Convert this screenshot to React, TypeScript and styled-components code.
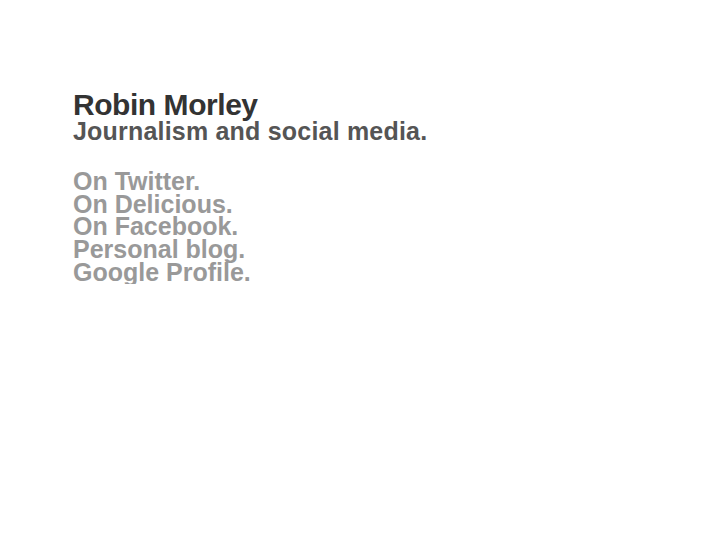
import React from 'react';
import styled, { createGlobalStyle } from 'styled-components';

const GlobalStyle = createGlobalStyle`
  html, body {
    margin: 0;
    padding: 0;
    background: #ffffff;
  }
  body {
    font-family: "Liberation Sans", Arial, Helvetica, sans-serif;
  }
`;

const Page = styled.div`
  padding: 90px 0 0 73px;
`;

const Name = styled.h1`
  margin: 0;
  font-size: 30px;
  line-height: 30px;
  font-weight: bold;
  letter-spacing: -0.45px;
  color: #333333;
`;

const Tagline = styled.h2`
  margin: 0 0 27px 0;
  font-size: 25px;
  line-height: 23px;
  font-weight: bold;
  letter-spacing: 0.2px;
  color: #555555;
`;

const LinkList = styled.ul`
  list-style: none;
  margin: 0;
  padding: 0;
`;

const Item = styled.li`
  font-size: 25px;
  line-height: 22.7px;
  font-weight: bold;
`;

const Link = styled.a`
  color: #999999;
  text-decoration: none;
`;

const links = [
  'On Twitter.',
  'On Delicious.',
  'On Facebook.',
  'Personal blog.',
  'Google Profile.',
];

export default function App() {
  return (
    <>
      <GlobalStyle />
      <Page>
        <Name>Robin Morley</Name>
        <Tagline>Journalism and social media.</Tagline>
        <LinkList>
          {links.map((label) => (
            <Item key={label}>
              <Link href="#">{label}</Link>
            </Item>
          ))}
        </LinkList>
      </Page>
    </>
  );
}
